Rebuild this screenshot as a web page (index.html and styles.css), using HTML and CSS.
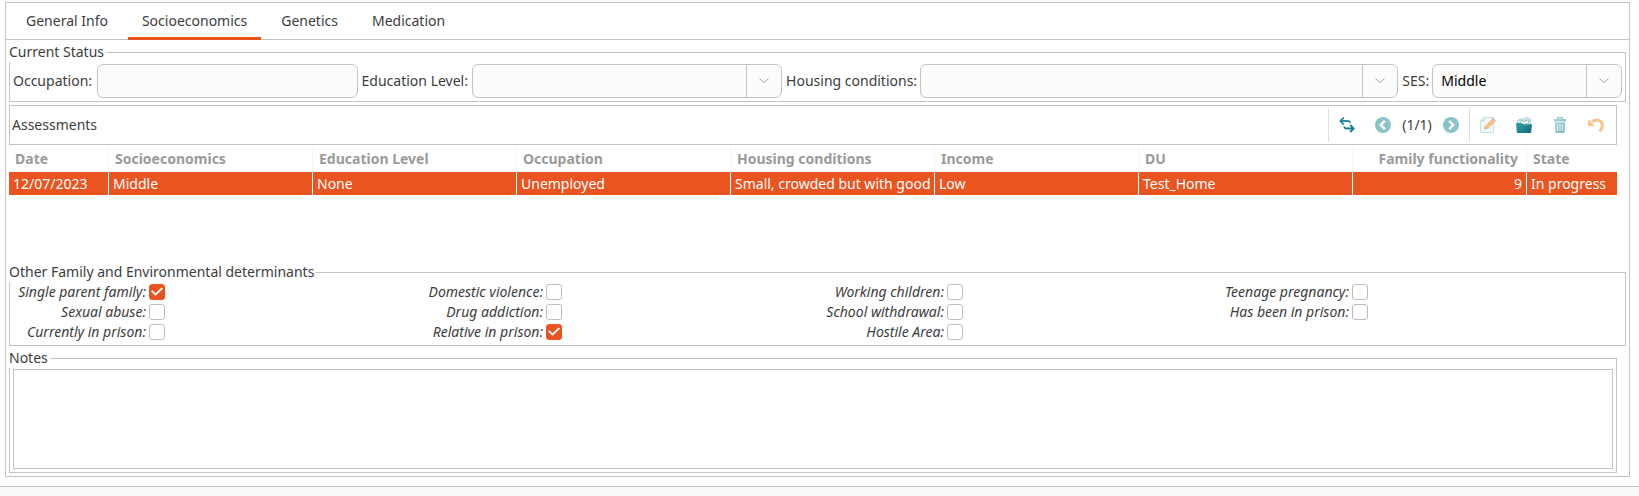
FILE: index.html
```html
<!DOCTYPE html>
<html lang="en">
<head>
<meta charset="utf-8">
<title>Socioeconomics</title>
<link rel="stylesheet" href="styles.css">
</head>
<body>
<main class="notebook">
  <nav class="tabs" role="tablist">
    <button class="tab" type="button" role="tab">General Info</button>
    <button class="tab active" type="button" role="tab" aria-selected="true">Socioeconomics</button>
    <button class="tab" type="button" role="tab">Genetics</button>
    <button class="tab" type="button" role="tab">Medication</button>
  </nav>
  <form class="page">
    <fieldset class="group">
      <legend>Current Status</legend>
      <div class="status">
        <label for="occupation">Occupation:</label>
        <input class="field" id="occupation" type="text">
        <label for="education">Education Level:</label>
        <div class="combo">
          <select class="field" id="education"><option></option></select>
          <span class="arrow"><svg width="12" height="8" viewBox="0 0 12 8"><path d="M1.500 1.500 6 5.500l4.500-4"/></svg></span>
        </div>
        <label for="housing">Housing conditions:</label>
        <div class="combo">
          <select class="field" id="housing"><option></option></select>
          <span class="arrow"><svg width="12" height="8" viewBox="0 0 12 8"><path d="M1.500 1.500 6 5.500l4.500-4"/></svg></span>
        </div>
        <label for="ses">SES:</label>
        <div class="combo">
          <select class="field" id="ses"><option>Middle</option></select>
          <span class="arrow"><svg width="12" height="8" viewBox="0 0 12 8"><path d="M1.500 1.500 6 5.500l4.500-4"/></svg></span>
        </div>
      </div>
    </fieldset>

    <section class="assessments">
      <header class="toolbar">
        <h2>Assessments</h2>
        <div class="tools">
          <button class="tool" type="button" aria-label="Switch view">
            <svg width="16" height="16" viewBox="0 0 16 16" fill="none" stroke="#2a8f9b" stroke-width="1.800"><path d="M4.800.5 1.300 4l3.500 3.500M1.500 4H9q2 0 2.300 1.800"/><path d="M11.200 8 14.700 11.500l-3.500 3.500M14.500 11.500H7.500q-2 0-2.500-2" stroke="#1d7f8b"/></svg>
          </button>
          <button class="tool" type="button" aria-label="Previous">
            <svg width="16" height="16" viewBox="0 0 16 16"><circle cx="8" cy="8" r="8" fill="#8ac3ca"/><path d="M9.800 3.800 5.800 8l4 4.200" fill="none" stroke="#fff" stroke-width="2.400"/></svg>
          </button>
          <span class="count">(1/1)</span>
          <button class="tool" type="button" aria-label="Next">
            <svg width="16" height="16" viewBox="0 0 16 16"><circle cx="8" cy="8" r="8" fill="#8ac3ca"/><path d="M6.200 3.800 10.200 8l-4 4.200" fill="none" stroke="#fff" stroke-width="2.400"/></svg>
          </button>
        </div>
        <div class="tools">
          <button class="tool" type="button" aria-label="Edit">
            <svg width="16" height="16" viewBox="0 0 16 16"><path d="M4 .5h9.500v15H.5V4z" fill="#f3fafb" stroke="#bfe0e4"/><path d="M.5 4H4V.5" fill="#d5ebee" stroke="#b0d8dd"/><path d="m4 12.500.8-3.500 7-7 3 3-7 7z" fill="#f6c383"/><path d="m11 2.800 3 3L16 3.800 13 .8z" fill="#efb9a0"/><path d="m4 12.500.8-3.500 3 3z" fill="#cfc3b0"/></svg>
          </button>
          <button class="tool" type="button" aria-label="Open">
            <svg width="16" height="16" viewBox="0 0 16 16"><defs><linearGradient id="folder" x2="1" y2="1"><stop stop-color="#37a0a6"/><stop offset="1" stop-color="#126b78"/></linearGradient></defs><path d="M1.500 7V3.500L5 1.800l1 .7L11 .5l3.500 1.500V7z" fill="#d2e9ec" stroke="#9bcbd1" stroke-width=".8"/><path d="m4 6 1-2.500 3 1L12 3l1 3" fill="#fff" stroke="#70b0b9" stroke-width=".8"/><path d="M0 6h5.500L7 7.200h9l-.8 7.800q-.1 1-1 1H1.800q-.9 0-1-1z" fill="url(#folder)"/></svg>
          </button>
          <button class="tool" type="button" aria-label="Delete">
            <svg width="16" height="16" viewBox="0 0 16 16"><defs><linearGradient id="bin" x2="1" y2="1"><stop stop-color="#a4d4d8"/><stop offset="1" stop-color="#80b5bf"/></linearGradient></defs><path d="M5.500 2V.6h5V2" fill="none" stroke="#8fc5cc" stroke-width="1.200"/><path d="M2 2h12v2.500H2zM3 5.500h10L12.500 16h-9z" fill="url(#bin)"/><path d="M5.700 7v7M8 7v7M10.300 7v7" stroke="#e8f4f5"/></svg>
          </button>
          <button class="tool" type="button" aria-label="Undo">
            <svg width="16" height="16" viewBox="0 0 16 16"><path d="M4 5C8.500 1 14.300 3.500 14.300 8.500c0 2.500-.8 4.200-2.800 6" fill="none" stroke="#f6c68c" stroke-width="3"/><path d="M0 2v7h7z" fill="#f6c68c"/></svg>
          </button>
        </div>
      </header>
      <div class="list">
        <table>
          <colgroup><col class="c-date"><col class="c-std"><col class="c-std"><col class="c-wide"><col class="c-std"><col class="c-std"><col class="c-wide"><col class="c-score"><col class="c-state"></colgroup>
          <thead><tr><th>Date</th><th>Socioeconomics</th><th>Education Level</th><th>Occupation</th><th>Housing conditions</th><th>Income</th><th>DU</th><th class="num">Family functionality</th><th>State</th></tr></thead>
          <tbody><tr><td>12/07/2023</td><td>Middle</td><td>None</td><td>Unemployed</td><td>Small, crowded but with good</td><td>Low</td><td>Test_Home</td><td class="num">9</td><td>In progress</td></tr></tbody>
        </table>
      </div>
    </section>

    <fieldset class="group">
      <legend>Other Family and Environmental determinants</legend>
      <div class="checks">
        <label class="check first">Single parent family:<input type="checkbox" checked></label>
        <label class="check">Domestic violence:<input type="checkbox"></label>
        <label class="check">Working children:<input type="checkbox"></label>
        <label class="check">Teenage pregnancy:<input type="checkbox"></label>
        <label class="check first">Sexual abuse:<input type="checkbox"></label>
        <label class="check">Drug addiction:<input type="checkbox"></label>
        <label class="check">School withdrawal:<input type="checkbox"></label>
        <label class="check">Has been in prison:<input type="checkbox"></label>
        <label class="check first">Currently in prison:<input type="checkbox"></label>
        <label class="check">Relative in prison:<input type="checkbox" checked></label>
        <label class="check">Hostile Area:<input type="checkbox"></label>
      </div>
    </fieldset>

    <fieldset class="group notes">
      <legend><label for="notes">Notes</label></legend>
      <textarea id="notes"></textarea>
    </fieldset>
  </form>
</main>
<footer class="statusbar"></footer>
</body>
</html>
```
FILE: styles.css
```css
* { box-sizing: border-box; }

:root {
  --line: #c4c4c4;
  --text: #3d3d3d;
  --accent: #e95420;
}

body {
  margin: 0;
  min-height: 100vh;
  display: flex;
  flex-direction: column;
  background: #fff;
  color: var(--text);
  font: 14px/20px "Noto Sans", "Open Sans", sans-serif;
}

button, input, select, textarea { font: inherit; color: inherit; margin: 0; }

.notebook {
  margin: 2px 9px 9px 5px;
  border: 1px solid var(--line);
}

.tabs {
  display: flex;
  gap: 6px;
  padding-left: 6px;
  border-bottom: 1px solid var(--line);
}

.tab {
  height: 37px;
  margin-bottom: -1px;
  padding: 2px 14px 0;
  border: 0;
  border-bottom: 3px solid transparent;
  background: none;
}

.tab.active { border-bottom-color: var(--accent); }

.page { padding: 2px 3px 3px; }

.group {
  min-width: 0;
  margin: 0;
  padding: 0 3px 3px;
  border: 1px solid var(--line);
}

.group legend {
  margin-left: -4px;
  padding: 0 2px 0 0;
}

.status {
  display: grid;
  grid-template-columns: 80px 261fr 106px 311fr 130px 479fr 26px 190fr;
  align-items: center;
  gap: 4px;
  white-space: nowrap;
  padding-top: 2px;
}

.field {
  display: block;
  width: 100%;
  min-width: 0;
  height: 34px;
  padding: 0 8px;
  border: 1px solid var(--line);
  border-radius: 6px;
  background: #fcfcfc;
  color: #000;
  appearance: none;
}

.combo { position: relative; }

.arrow {
  position: absolute;
  inset: 1px 1px 1px auto;
  width: 35px;
  display: grid;
  place-items: center;
  border-left: 1px solid var(--line);
  pointer-events: none;
}

.arrow path { fill: none; stroke: #a3a3a3; }

.assessments { margin: 3px 9px 0 0; }

.toolbar {
  display: flex;
  height: 40px;
  padding: 2px;
  border: 1px solid var(--line);
}

.toolbar h2 {
  flex: 1;
  margin: 0;
  font: inherit;
  line-height: 34px;
}

.tools {
  display: flex;
  align-items: center;
  border-left: 1px solid #dedede;
}

.tool {
  display: grid;
  place-items: center;
  width: 36px;
  height: 34px;
  padding: 0;
  border: 0;
  background: none;
}

.count { width: 32px; text-align: center; }

.list { height: 117px; padding-top: 2px; }

table {
  width: 100%;
  table-layout: fixed;
  border-collapse: separate;
  border-spacing: 0;
}

.c-date { width: 99px; }
.c-std { width: 204px; }
.c-wide { width: 214px; }
.c-score { width: 174px; }
.c-state { width: 91px; }

th, td {
  overflow: hidden;
  white-space: nowrap;
  text-align: left;
}

th {
  height: 25px;
  padding: 0 6px 2px;
  border-left: 1px solid #f5f5f5;
  color: #9a9a9a;
}

td {
  height: 23px;
  padding: 0 4px;
  border-left: 1px solid #fff;
  background: var(--accent);
  color: #fff;
}

th:first-child, td:first-child { border-left: 0; }
th:first-child { padding-left: 6px; }
th.num { padding-right: 8px; }
.num { text-align: right; }

.checks {
  display: grid;
  grid-template-columns: 152px 397fr 401fr 405fr 254fr;
  grid-auto-rows: 20px;
}

.check {
  display: flex;
  align-items: center;
  justify-content: flex-end;
  gap: 3px;
  font-style: italic;
  white-space: nowrap;
}

.check.first { grid-column: 1; }

.check input {
  display: grid;
  place-items: center;
  width: 16px;
  height: 16px;
  border: 1px solid #bdbdbd;
  border-radius: 3px;
  background: #fff;
  appearance: none;
}

.check input:checked { border-color: var(--accent); background: var(--accent); }

.check input:checked::before {
  content: "";
  width: 12px;
  height: 10px;
  background: #fff;
  clip-path: polygon(0 45%, 12% 32%, 38% 62%, 88% 5%, 100% 18%, 38% 88%);
}

textarea {
  display: block;
  width: 100%;
  height: 100px;
  margin-top: 1px;
  border: 1px solid var(--line);
  background: #fff;
  resize: none;
}

.notes { margin: 2px 9px 0 0; }

.statusbar {
  flex: 1;
  border-top: 1px solid var(--line);
  background: #fafafa;
}
```
